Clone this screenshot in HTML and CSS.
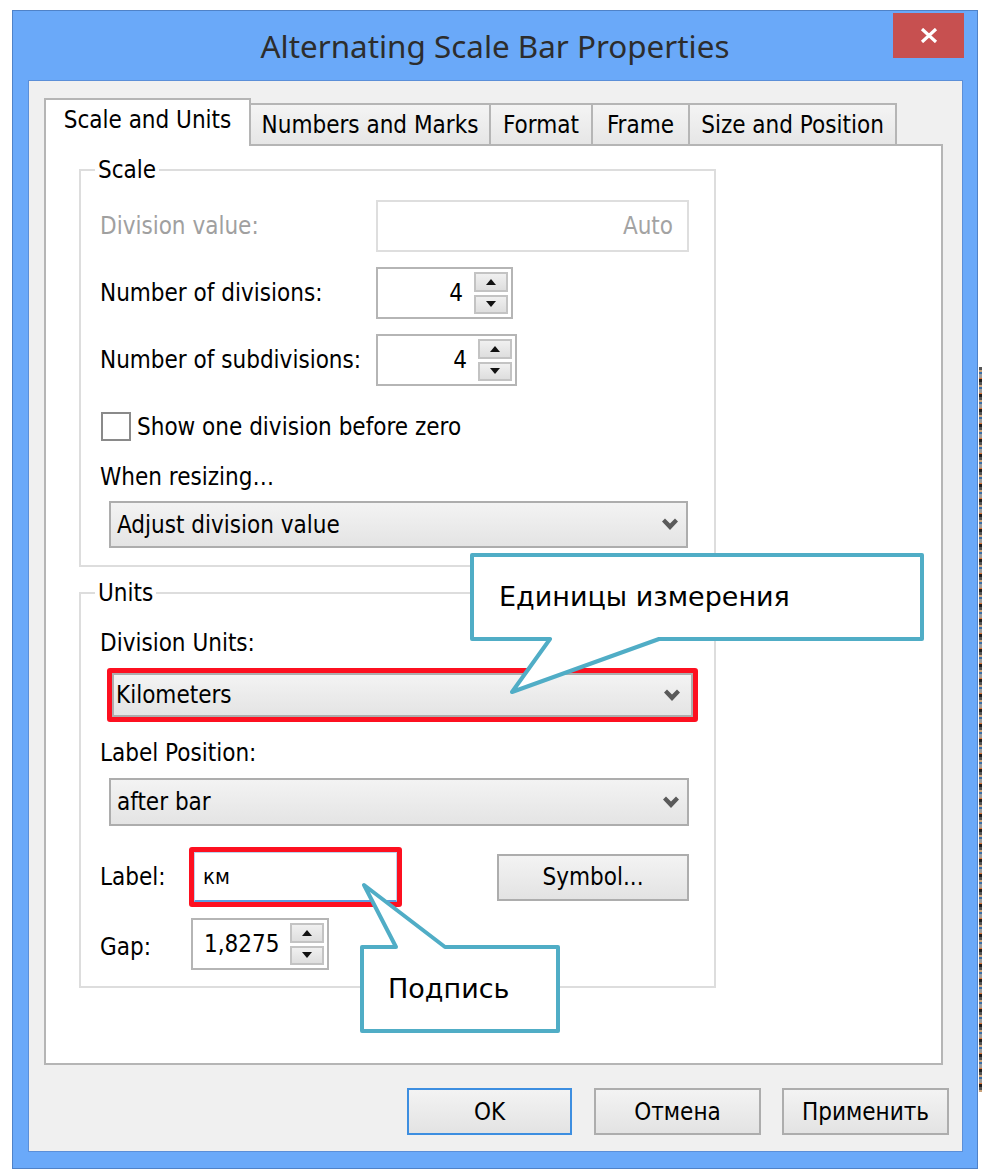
FILE: index.html
```html
<!DOCTYPE html>
<html lang="en">
<head>
<meta charset="utf-8">
<title>Alternating Scale Bar Properties</title>
<link rel="stylesheet" href="styles.css">
</head>
<body>
<div class="stage">
  <div class="window">
    <div class="titlebar">
      <div class="title">Alternating Scale Bar Properties</div>
      <button class="close" type="button" aria-label="Close">
        <svg width="18" height="15" viewBox="0 0 18 15"><path d="M2 1 L16 14 M16 1 L2 14" stroke="#fff" stroke-width="3.2" fill="none"/></svg>
      </button>
    </div>
    <div class="client">
      <div class="tabs">
        <div class="tab active t1">Scale and Units</div>
        <div class="tab t2">Numbers and Marks</div>
        <div class="tab t3">Format</div>
        <div class="tab t4">Frame</div>
        <div class="tab t5">Size and Position</div>
      </div>
      <div class="panel">
        <fieldset class="group scale">
          <legend>Scale</legend>
          <div class="frow r-div">
            <span class="lbl disabled">Division value:</span>
            <div class="textbox disabled-box">Auto</div>
          </div>
          <div class="frow r-n">
            <span class="lbl">Number of divisions:</span>
            <div class="spin w137">
              <span class="val">4</span>
              <div class="spin-btns"><span class="spin-btn up"></span><span class="spin-btn down"></span></div>
            </div>
          </div>
          <div class="frow r-sub">
            <span class="lbl">Number of subdivisions:</span>
            <div class="spin w141">
              <span class="val">4</span>
              <div class="spin-btns"><span class="spin-btn up"></span><span class="spin-btn down"></span></div>
            </div>
          </div>
          <div class="check-row">
            <span class="checkbox"></span>
            <span>Show one division before zero</span>
          </div>
          <div class="plain-label resize">When resizing…</div>
          <div class="combo c-adjust">
            <span>Adjust division value</span>
            <svg class="chev" width="16" height="13" viewBox="0 0 16 13"><polygon points="0,3.5 3,0.5 8,5.5 13,0.5 16,3.5 8,12" fill="#5a5a5a"/></svg>
          </div>
        </fieldset>
        <fieldset class="group units">
          <legend>Units</legend>
          <div class="plain-label first">Division Units:</div>
          <div class="hl-red wide">
            <div class="combo in-red">
              <span>Kilometers</span>
              <svg class="chev" width="16" height="13" viewBox="0 0 16 13"><polygon points="0,3.5 3,0.5 8,5.5 13,0.5 16,3.5 8,12" fill="#5a5a5a"/></svg>
            </div>
          </div>
          <div class="plain-label pos">Label Position:</div>
          <div class="combo c-after">
            <span>after bar</span>
            <svg class="chev" width="16" height="13" viewBox="0 0 16 13"><polygon points="0,3.5 3,0.5 8,5.5 13,0.5 16,3.5 8,12" fill="#5a5a5a"/></svg>
          </div>
          <div class="label-row">
            <span class="lbl l-label">Label:</span>
            <div class="hl-red small">
              <div class="input-focus">км</div>
            </div>
            <button class="btn btn-symbol" type="button">Symbol...</button>
          </div>
          <div class="gap-row">
            <span class="lbl l-gap">Gap:</span>
            <div class="spin w138">
              <span class="val clip">1,8275</span>
              <div class="spin-btns"><span class="spin-btn up"></span><span class="spin-btn down"></span></div>
            </div>
          </div>
        </fieldset>
      </div>
      <div class="buttons">
        <button class="btn btn-ok" type="button">OK</button>
        <button class="btn btn-cancel" type="button">Отмена</button>
        <button class="btn btn-apply" type="button">Применить</button>
      </div>
    </div>
  </div>

  <div class="callout c1">
    <svg width="454" height="143" viewBox="0 0 454 143"><path d="M2 2 H452 V86 H189 L42 139 L80 86 H2 Z" fill="#fff" stroke="#50adc6" stroke-width="4" stroke-linejoin="round"/></svg>
    <div class="ctext">Единицы измерения</div>
  </div>
  <div class="callout c2">
    <svg width="200" height="151" viewBox="0 0 200 151"><path d="M2 65 H36 L4 3 L85 65 H198 V149 H2 Z" fill="#fff" stroke="#50adc6" stroke-width="4" stroke-linejoin="round"/></svg>
    <div class="ctext">Подпись</div>
  </div>
  <div class="edge"></div>
</div>
</body>
</html>
```
FILE: styles.css
```css
* { box-sizing: border-box; }

body {
  margin: 0;
  background: #fff;
  font-family: "DejaVu Sans Condensed", "Liberation Sans", sans-serif;
  font-size: 24px;
  color: #000;
}

.stage {
  position: relative;
  width: 992px;
  height: 1176px;
  overflow: hidden;
}

/* window frame */
.window {
  margin: 10px 0 0 12px;
  width: 966px;
  height: 1159px;
  border: 1px solid #4f82c8;
  background: #6aa9f9;
  padding: 0 14px 16px 15px;
  display: flex;
  flex-direction: column;
}

.titlebar {
  height: 69px;
  margin: 0 -14px 0 -15px;
  display: grid;
  grid-template-columns: 1fr auto 1fr;
}

.title {
  grid-column: 2;
  align-self: center;
  font-family: "Noto Sans", sans-serif;
  font-size: 31.4px;
  line-height: 1;
  color: #2d2d2d;
  white-space: nowrap;
}

.close {
  grid-column: 3;
  justify-self: end;
  align-self: start;
  margin: 2px 13px 0 0;
  width: 71px;
  height: 45px;
  padding: 0;
  border: 0;
  background: #c75050;
  display: flex;
  align-items: center;
  justify-content: center;
}

.client {
  flex: 1;
  background: #f0f0f0;
  border: 1px solid #5b8fd8;
  padding: 17px 13px 0 15px;
  display: flex;
  flex-direction: column;
}

/* tabs */
.tabs {
  display: flex;
  align-items: flex-end;
}

.tab {
  height: 41px;
  border: 2px solid #b5b5b5;
  border-left: 0;
  border-bottom: 0;
  background: linear-gradient(#f4f4f4, #e6e6e6);
  display: flex;
  align-items: center;
  justify-content: center;
  line-height: 1;
  white-space: nowrap;
}

.tab.active {
  height: 48px;
  border-left: 2px solid #b5b5b5;
  background: #fff;
  margin-bottom: -2px;
  padding-bottom: 6px;
  position: relative;
  z-index: 1;
}

.t1 { width: 207px; }
.t2 { width: 240px; }
.t3 { width: 102px; }
.t4 { width: 97px; }
.t5 { width: 207px; }

.panel {
  width: 899px;
  height: 921px;
  background: #fff;
  border: 2px solid #b5b5b5;
  padding: 10px 0 0 33px;
}

/* group boxes */
.group {
  width: 637px;
  min-width: 0;
  margin: 0;
  border: 2px solid #dddddd;
  padding: 16px 0 17px 19px;
}

.group.units {
  margin-top: 12px;
  padding-bottom: 16px;
}

.group legend {
  padding: 0 3px;
  margin-left: -5px;
  height: 28px;
  line-height: 28px;
}

.lbl { white-space: nowrap; }
.lbl.disabled { color: #a0a0a0; }

.frow {
  display: grid;
  align-items: center;
  height: 52px;
}

.r-div { grid-template-columns: 276px 313px; }
.r-n { margin-top: 15px; grid-template-columns: 276px 137px; }
.r-sub { margin-top: 15px; grid-template-columns: 276px 141px; }

.textbox {
  height: 52px;
  border: 2px solid #dedede;
  background: #fff;
  display: flex;
  align-items: center;
  justify-content: flex-end;
  padding-right: 14px;
}

.disabled-box { color: #a3a3a3; }

/* spin boxes */
.spin {
  height: 52px;
  border: 2px solid #b5b5b5;
  background: #fff;
  display: flex;
  align-items: center;
  padding: 3px;
}

.w137 { width: 137px; }
.w141 { width: 141px; }
.w138 { width: 138px; }

.spin .val {
  flex: 1;
  min-width: 0;
  text-align: right;
  padding-right: 11px;
  overflow: hidden;
  white-space: nowrap;
}

.spin .val.clip {
  text-align: left;
  padding: 0 0 0 8px;
  margin-right: 2px;
}

.spin-btns {
  width: 34px;
  align-self: stretch;
  display: flex;
  flex-direction: column;
  gap: 3px;
}

.spin-btn {
  flex: 1;
  border: 2px solid #c3c3c3;
  background: linear-gradient(#f0f0f0, #dedede);
  display: flex;
  align-items: center;
  justify-content: center;
}

.spin-btn.up::before {
  content: "";
  border-left: 5px solid transparent;
  border-right: 5px solid transparent;
  border-bottom: 6px solid #111;
}

.spin-btn.down::before {
  content: "";
  border-left: 5px solid transparent;
  border-right: 5px solid transparent;
  border-top: 6px solid #111;
}

/* checkbox */
.check-row {
  margin-top: 26px;
  margin-left: 1px;
  height: 29px;
  display: flex;
  align-items: center;
  gap: 6px;
}

.checkbox {
  width: 30px;
  height: 29px;
  border: 2px solid #8a8a8a;
  background: #fff;
}

.plain-label {
  line-height: 28px;
  white-space: nowrap;
}

.plain-label.resize { margin-top: 22px; }
.plain-label.first { margin-top: 6px; }
.plain-label.pos { margin-top: 17px; }

/* combo boxes */
.combo {
  height: 47px;
  border: 2px solid #adadad;
  background: linear-gradient(#f3f3f3, #e4e4e4);
  display: flex;
  align-items: center;
  justify-content: space-between;
  padding: 0 8px 0 6px;
  white-space: nowrap;
}

.c-adjust { margin: 10px 0 0 9px; width: 579px; }
.c-after { margin: 11px 0 0 9px; width: 580px; height: 48px; }

.combo.in-red {
  height: 44px;
  padding: 0 11px 0 2px;
}

/* red highlight frames */
.hl-red {
  border: 5px solid #fd1020;
  border-radius: 3px;
}

.hl-red.wide {
  margin: 11px 0 0 7px;
  width: 591px;
}

.hl-red.small {
  width: 213px;
  height: 60px;
}

.input-focus {
  height: 50px;
  border: 1px solid #bcd3ee;
  border-bottom: 2px solid #5b9ce0;
  background: #fff;
  padding-left: 8px;
  display: flex;
  align-items: center;
  font-size: 22px;
}

.label-row {
  margin-top: 21px;
  height: 60px;
  display: flex;
  align-items: center;
}

.l-label { width: 89px; }

.gap-row {
  margin-top: 11px;
  height: 52px;
  display: flex;
  align-items: center;
}

.l-gap { width: 91px; padding-top: 6px; }

/* buttons */
.btn {
  height: 47px;
  padding: 0;
  border: 2px solid #adadad;
  background: linear-gradient(#f3f3f3, #e3e3e3);
  font: inherit;
  color: #000;
  display: flex;
  align-items: center;
  justify-content: center;
}

.btn-symbol { margin-left: 95px; width: 192px; }

.buttons {
  margin-top: 23px;
  display: flex;
  justify-content: flex-end;
  gap: 21px;
}

.btn-ok { width: 165px; border-color: #3d8ee0; margin-right: 1px; }
.btn-cancel { width: 167px; }
.btn-apply { width: 167px; }

/* annotation callouts */
.callout { position: absolute; }
.callout svg { position: absolute; left: 0; top: 0; }

.c1 { left: 470px; top: 553px; width: 454px; height: 143px; }
.c2 { left: 360px; top: 882px; width: 200px; height: 151px; }

.ctext {
  position: absolute;
  font-family: "DejaVu Sans", sans-serif;
  font-size: 27px;
  line-height: 1;
  white-space: pre;
  color: #000;
}

.c1 .ctext { left: 29px; top: 30px; }
.c2 .ctext { left: 28px; top: 93px; }

/* screenshot edge artefact */
.edge {
  position: absolute;
  left: 979px;
  top: 367px;
  width: 3px;
  height: 725px;
  background: repeating-linear-gradient(to bottom, #555 0 3px, #c9a27a 3px 5px, #3a6ea8 5px 7px, #9a9a9a 7px 11px, #e07030 11px 12px, #222 12px 15px);
}
```
